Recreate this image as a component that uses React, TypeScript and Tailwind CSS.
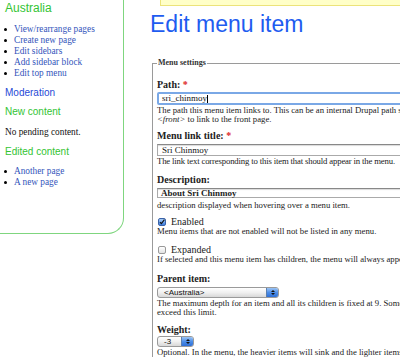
import React from 'react';

const serif = "font-['Liberation_Serif',_'Times_New_Roman',_serif]";
const sans = "font-['Liberation_Sans',_Arial,_sans-serif]";

const sidebarLinks = ['View/rearrange pages', 'Create new page', 'Edit sidebars', 'Add sidebar block', 'Edit top menu'];
const editedLinks = ['Another page', 'A new page'];

function Bullets({ items }: { items: string[] }) {
  return (
    <ul>
      {items.map(item => (
        <li key={item} className="flex items-center h-[11px]">
          <span className="ml-[4px] w-[3px] h-[3px] rounded-full bg-black"></span>
          <a className={`ml-[7px] text-[9.3px] leading-[11px] text-[#3355bb] ${serif}`}>{item}</a>
        </li>
      ))}
    </ul>
  );
}

function Label({ text, required }: { text: string; required?: boolean }) {
  return (
    <div className={`text-[10px] leading-[12px] font-bold text-[#222] ${serif}`}>
      {text} {required && <span className="text-[#d22]">*</span>}
    </div>
  );
}

function Hint({ children, tight }: { children: React.ReactNode; tight?: boolean }) {
  return (
    <div className={`text-[8.7px] leading-[9px] text-[#222] whitespace-nowrap ${tight ? 'tracking-[-0.15px]' : ''} ${serif}`}>{children}</div>
  );
}

function Select({ value, width }: { value: string; width: string }) {
  return (
    <div className={`flex h-[11px] ${width} rounded-[3px] border border-[#9a9a9a] overflow-hidden bg-gradient-to-b from-white via-[#f0f0f0] to-[#d8d8d8]`}>
      <span className={`flex-1 pl-[6px] text-[8px] leading-[9px] text-[#111] ${sans}`}>{value}</span>
      <span className="w-[12px] flex flex-col items-center justify-center gap-[1px] bg-gradient-to-b from-[#9cc4f4] via-[#4d8ee8] to-[#2e6fd6] border-l border-[#5a7fb0]">
        <span className="w-0 h-0 border-x-[2px] border-x-transparent border-b-[2px] border-b-[#111]"></span>
        <span className="w-0 h-0 border-x-[2px] border-x-transparent border-t-[2px] border-t-[#111]"></span>
      </span>
    </div>
  );
}

export default function App() {
  return (
    <div className="flex w-[400px] h-[357px] bg-white overflow-hidden">
      {/* Sidebar */}
      <div className="w-[124px] h-[234px] shrink-0 border-r border-b border-[#7fd67f] rounded-br-[16px]">
        <h3 className={`mt-[1px] ml-[5px] text-[12px] leading-[14px] text-[#33c433] ${sans}`}>Australia</h3>
        <div className="mt-[9px]">
          <Bullets items={sidebarLinks} />
        </div>
        <h3 className={`mt-[8px] ml-[5px] text-[10px] leading-[12px] text-[#1f49d6] ${sans}`}>Moderation</h3>
        <h4 className={`mt-[7px] ml-[5px] text-[10px] leading-[12px] text-[#33c433] ${sans}`}>New content</h4>
        <p className={`mt-[9px] ml-[5px] text-[9.3px] leading-[11px] text-[#111] ${serif}`}>No pending content.</p>
        <h4 className={`mt-[8px] ml-[5px] text-[10px] leading-[12px] text-[#33c433] ${sans}`}>Edited content</h4>
        <div className="mt-[8px]">
          <Bullets items={editedLinks} />
        </div>
      </div>

      {/* Main content */}
      <div className="ml-[26px] flex-1 min-w-0">
        <div className="ml-[10px] h-[6px] w-[400px] bg-[#ffffc8] border-l border-b border-[#ece37a]"></div>
        <h1 className={`mt-[4px] text-[23px] leading-[28px] text-[#1e5cf0] ${sans}`}>Edit menu item</h1>

        <fieldset className="mt-[20px] ml-[2px] w-[400px] border border-[#9a9a9a] pl-[4px]">
          <legend className={`px-[1px] text-[8px] leading-[10px] font-bold text-[#333] ${serif}`}>Menu settings</legend>

          <div className="mt-[11px]">
            <Label text="Path:" required />
          </div>
          <div className="mt-[1px] h-[13px] border-2 border-[#7aa8e6] rounded-[2px] bg-white flex items-center pl-[3px]">
            <span className={`text-[9px] leading-[9px] text-[#111] ${serif}`}>sri_chinmoy</span>
            <span className="w-px h-[8px] bg-black"></span>
          </div>
          <div className="mt-[1px]">
            <Hint>The path this menu item links to. This can be an internal Drupal path such as node/add or an external URL such as http://drupal.org. Enter</Hint>
            <Hint><em>&lt;front&gt;</em> to link to the front page.</Hint>
          </div>

          <div className="mt-[6px]">
            <Label text="Menu link title:" required />
          </div>
          <div className="mt-[2px] h-[12px] border border-[#aaa] border-t-[#888] shadow-[inset_0_1px_1px_rgba(0,0,0,0.15)] bg-white flex items-center pl-[4px]">
            <span className={`text-[9px] leading-[9px] text-[#111] ${serif}`}>Sri Chinmoy</span>
          </div>
          <div className="mt-[1px]">
            <Hint tight>The link text corresponding to this item that should appear in the menu.</Hint>
          </div>

          <div className="mt-[8px]">
            <Label text="Description:" />
          </div>
          <div className="mt-[2px] h-[10px] border border-[#aaa] border-t-[#888] shadow-[inset_0_1px_1px_rgba(0,0,0,0.15)] bg-white flex items-center pl-[3px]">
            <span className={`text-[9px] leading-[9px] font-bold text-[#222] ${serif}`}>About Sri Chinmoy</span>
          </div>
          <div className="mt-[3px]">
            <Hint>description displayed when hovering over a menu item.</Hint>
          </div>

          <div className="mt-[7px] flex items-center h-[10px]">
            <span className="ml-[1px] w-[8px] h-[8px] rounded-[2px] border border-[#3a62a8] bg-gradient-to-b from-[#a8cdf7] to-[#3c7ee0] flex items-center justify-center">
              <svg viewBox="0 0 10 10" className="w-[8px] h-[8px]">
                <path d="M1.5 5.2 L4 7.8 L9 1" fill="none" stroke="#111" strokeWidth="1.8" />
              </svg>
            </span>
            <span className={`ml-[5px] text-[10px] leading-[10px] text-[#222] ${serif}`}>Enabled</span>
          </div>
          <div>
            <Hint>Menu items that are not enabled will not be listed in any menu.</Hint>
          </div>

          <div className="mt-[9px] flex items-center h-[10px]">
            <span className="ml-[1px] w-[8px] h-[8px] rounded-[2px] border border-[#999] bg-gradient-to-b from-white to-[#e2e2e2]"></span>
            <span className={`ml-[5px] text-[10px] leading-[10px] text-[#222] ${serif}`}>Expanded</span>
          </div>
          <div>
            <Hint>If selected and this menu item has children, the menu will always appear expanded.</Hint>
          </div>

          <div className="mt-[9px]">
            <Label text="Parent item:" />
          </div>
          <div className="mt-[2px]">
            <Select value="<Australia>" width="w-[122px]" />
          </div>
          <div className="mt-[1px]">
            <Hint>The maximum depth for an item and all its children is fixed at 9. Some menu items may not be available as parents if selecting them would</Hint>
            <Hint>exceed this limit.</Hint>
          </div>

          <div className="mt-[7px]">
            <Label text="Weight:" />
          </div>
          <div>
            <Select value="-3" width="w-[37px]" />
          </div>
          <div className="mt-[1px]">
            <Hint>Optional. In the menu, the heavier items will sink and the lighter items will be positioned nearer the top.</Hint>
          </div>
        </fieldset>
      </div>
    </div>
  );
}
